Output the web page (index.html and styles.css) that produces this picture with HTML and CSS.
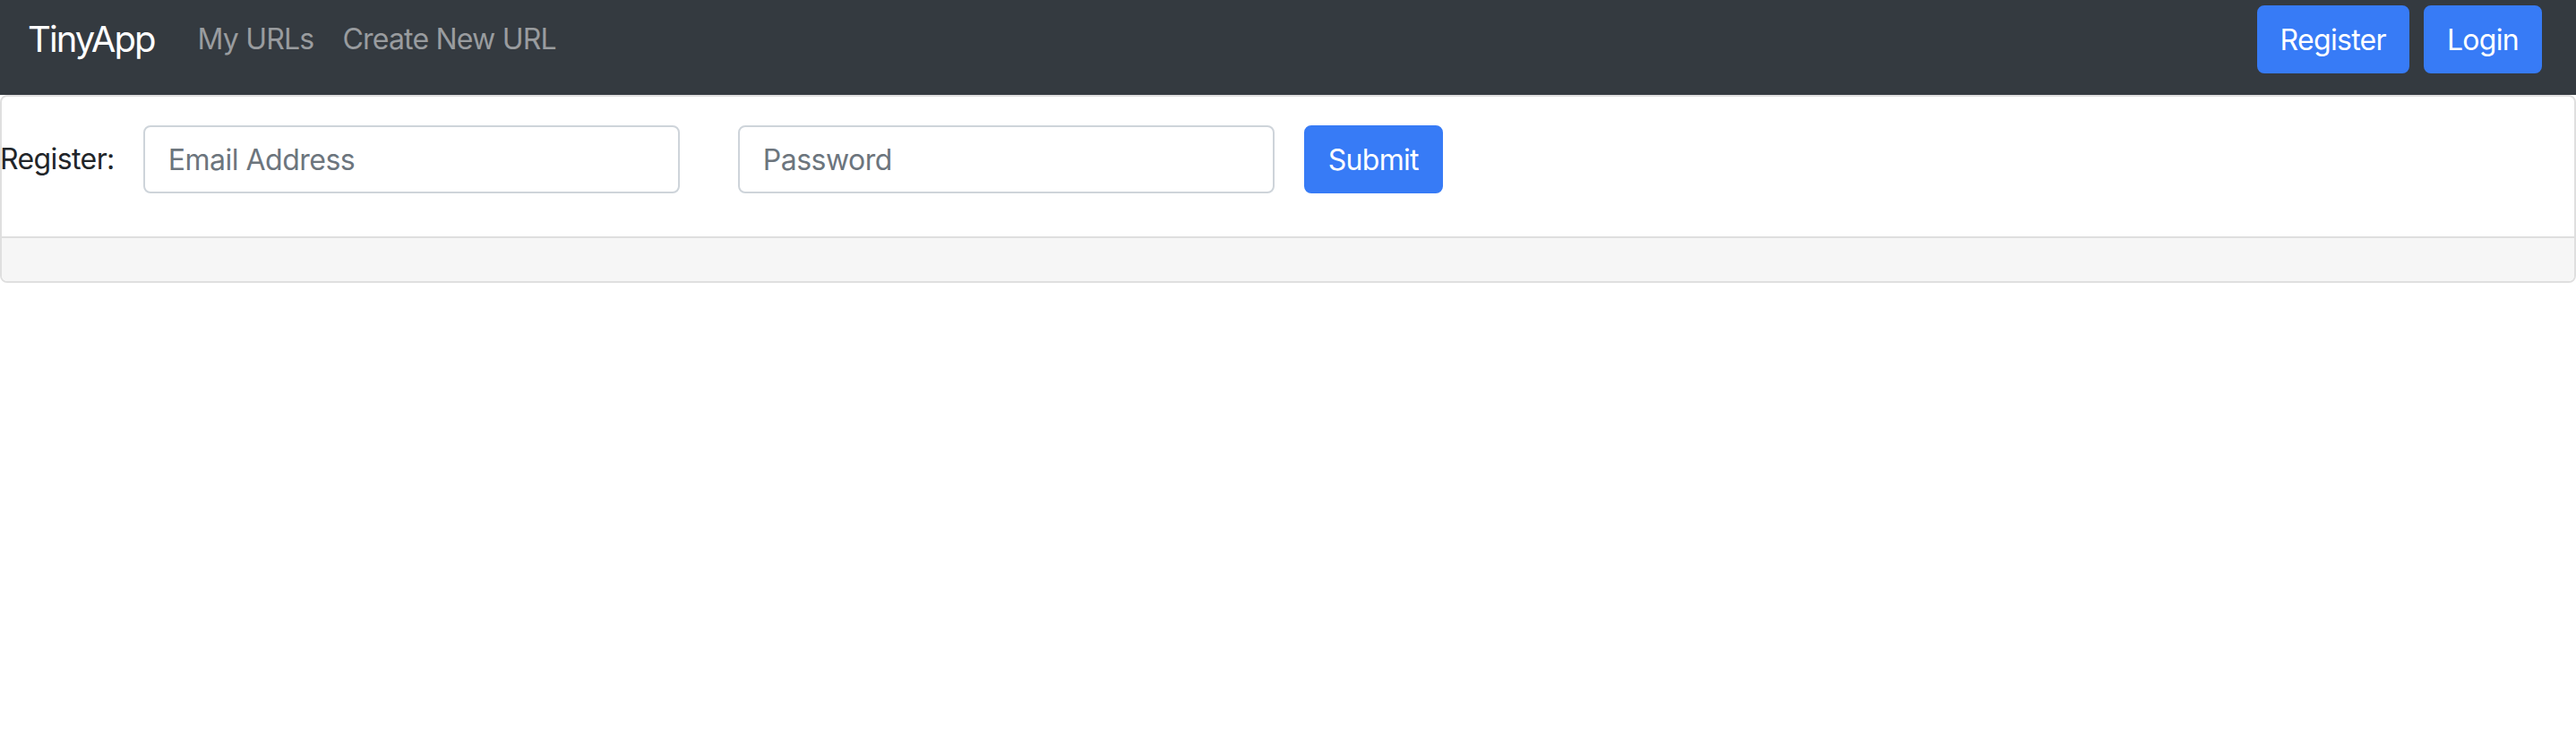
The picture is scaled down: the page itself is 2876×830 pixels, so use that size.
FILE: index.html
```html
<!DOCTYPE html>
<html lang="en">
<head>
<meta charset="utf-8">
<title>TinyApp</title>
<link rel="stylesheet" href="styles.css">
</head>
<body>
  <nav class="navbar">
    <div class="nav-left">
      <a class="brand" href="#">TinyApp</a>
      <a class="nav-link" href="#">My URLs</a>
      <a class="nav-link" href="#">Create New URL</a>
    </div>
    <div class="nav-right">
      <a class="btn btn-nav" href="#">Register</a>
      <a class="btn btn-nav" href="#">Login</a>
    </div>
  </nav>
  <main class="card">
    <div class="card-body">
      <form class="reg-form">
        <label class="reg-label" for="email">Register:</label>
        <input class="form-input" id="email" type="email" placeholder="Email Address">
        <input class="form-input input-pass" type="password" placeholder="Password">
        <button class="btn btn-submit" type="button">Submit</button>
      </form>
    </div>
    <div class="card-footer"></div>
  </main>
</body>
</html>
```

FILE: styles.css
```css
* { box-sizing: border-box; }

body {
  margin: 0;
  font-family: Inter, "Liberation Sans", sans-serif;
  color: #212529;
  background: #fff;
}

a { text-decoration: none; }

.navbar {
  height: 106px;
  background: #343a40;
  display: flex;
  justify-content: space-between;
  align-items: flex-start;
  padding: 6px 38px 0 31px;
}

.nav-left {
  display: flex;
  align-items: center;
  height: 76px;
}

.brand {
  color: #fff;
  font-size: 40px;
  line-height: 60px;
  margin-right: 32px;
  letter-spacing: -1.9px;
}

.nav-link {
  color: #999c9f;
  font-size: 32px;
  line-height: 48px;
  padding: 0 16px;
  letter-spacing: -0.8px;
}

.nav-right {
  display: flex;
  gap: 16px;
}

.btn {
  display: inline-flex;
  align-items: center;
  justify-content: center;
  height: 76px;
  padding: 2px 24px 0;
  border: 2px solid #377bf6;
  background: #377bf6;
  color: #fff;
  font-family: inherit;
  font-size: 32px;
  line-height: 48px;
  border-radius: 8px;
  letter-spacing: -0.7px;
}

.card {
  display: block;
  border: 2px solid #dfdfdf;
  border-radius: 8px;
  background: #fff;
}

.card-body {
  padding: 32px 0 48px;
}

.reg-form {
  display: flex;
  align-items: center;
  height: 76px;
}

.reg-label {
  font-size: 32px;
  line-height: 48px;
  margin-left: -2px;
  margin-right: 32px;
  letter-spacing: -0.6px;
}

.form-input {
  width: 599px;
  height: 76px;
  border: 2px solid #ced4da;
  border-radius: 8px;
  padding: 0 26px;
  font-family: inherit;
  font-size: 32px;
  color: #495057;
  background: #fff;
  letter-spacing: -0.5px;
}

.form-input::placeholder {
  color: #6c757d;
  opacity: 1;
}

.input-pass {
  margin-left: 65px;
}

.btn-submit {
  margin-left: 33px;
  padding: 2px 25px 0;
}

.card-footer {
  height: 50px;
  border-top: 2px solid #dfdfdf;
  background: #f6f6f6;
  border-radius: 0 0 6px 6px;
}
```
